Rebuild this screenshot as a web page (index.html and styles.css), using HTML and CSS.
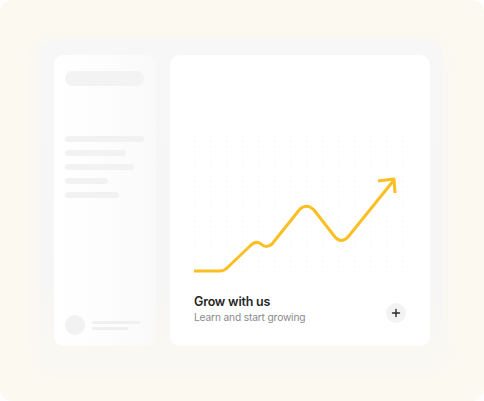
FILE: index.html
```html
<!DOCTYPE html>
<html>
<head>
<meta charset="utf-8">
<link rel="stylesheet" href="styles.css">
</head>
<body>
<div class="frame">
  <div class="panel">
    <aside class="sidebar">
      <div class="pill"></div>
      <div class="lines">
        <div class="line w79"></div>
        <div class="line w61"></div>
        <div class="line w69"></div>
        <div class="line w43"></div>
        <div class="line w54"></div>
      </div>
      <div class="user">
        <div class="avatar"></div>
        <div class="user-lines">
          <div class="uline u1"></div>
          <div class="uline u2"></div>
        </div>
      </div>
    </aside>
    <main class="card">
      <svg class="chart" width="214" height="150" viewBox="0 0 214 150">
        <g class="grid">
          <line x1="0.5" y1="1" x2="0.5" y2="149"/>
          <line x1="16.5" y1="1" x2="16.5" y2="149"/>
          <line x1="32.5" y1="1" x2="32.5" y2="149"/>
          <line x1="48.5" y1="1" x2="48.5" y2="149"/>
          <line x1="64.5" y1="1" x2="64.5" y2="149"/>
          <line x1="80.5" y1="1" x2="80.5" y2="149"/>
          <line x1="96.5" y1="1" x2="96.5" y2="149"/>
          <line x1="112.5" y1="1" x2="112.5" y2="149"/>
          <line x1="128.5" y1="1" x2="128.5" y2="149"/>
          <line x1="144.5" y1="1" x2="144.5" y2="149"/>
          <line x1="160.5" y1="1" x2="160.5" y2="149"/>
          <line x1="176.5" y1="1" x2="176.5" y2="149"/>
          <line x1="192.5" y1="1" x2="192.5" y2="149"/>
          <line x1="208.5" y1="1" x2="208.5" y2="149"/>
        </g>
        <path class="trend" d="M0 146 H26 Q30 146 33 143 L56 121 Q62 115 67 119 Q72 124 78 119 L106 84 Q113 78 120 85 L141 112 Q147 119 154 112 L200 55"/>
        <path class="trend" d="M184 56 L200 54 L201 68"/>
      </svg>
      <div class="footer">
        <div class="texts">
          <div class="title">Grow with us</div>
          <div class="sub">Learn and start growing</div>
        </div>
        <div class="plus">
          <svg width="10" height="10" viewBox="0 0 10 10"><path d="M5 1.5V8.5M1.5 5H8.5" stroke="#2a2a2a" stroke-width="1.4" stroke-linecap="round"/></svg>
        </div>
      </div>
    </main>
  </div>
</div>
</body>
</html>
```
FILE: styles.css
```css
html, body {
  margin: 0;
  padding: 0;
  background: #ffffff;
}
.frame {
  width: 484px;
  height: 401px;
  box-sizing: border-box;
  border-radius: 12px;
  background: #fcf9f0;
  padding: 40px 41px 0 40px;
  font-family: Inter, "Noto Sans", sans-serif;
  overflow: hidden;
}
.panel {
  display: flex;
  gap: 14px;
  padding: 15px 13px 16px 14px;
  border-radius: 14px;
  background: linear-gradient(to bottom, #f7f7f8 0%, #f6f6f6 75%, rgba(246,246,246,0.3) 100%);
  box-shadow: 0 4px 14px 4px rgba(246,246,246,0.7);
}
.sidebar {
  width: 102px;
  height: 291px;
  box-sizing: border-box;
  padding: 16px 12px 11px 11px;
  border-radius: 9px;
  background: linear-gradient(to right, #ffffff 0%, #fdfdfd 50%, #f9f9f9 100%);
  display: flex;
  flex-direction: column;
}
.pill {
  height: 15px;
  border-radius: 8px;
  background: #f3f3f3;
}
.lines {
  margin-top: 50px;
  display: flex;
  flex-direction: column;
  gap: 8px;
}
.line {
  height: 6px;
  border-radius: 3px;
  background: #f2f2f2;
}
.w79 { width: 79px; }
.w61 { width: 61px; }
.w69 { width: 69px; }
.w43 { width: 43px; }
.w54 { width: 54px; }
.user {
  margin-top: auto;
  display: flex;
  align-items: center;
  gap: 7px;
}
.avatar {
  width: 20px;
  height: 20px;
  border-radius: 50%;
  background: #f2f2f2;
}
.user-lines {
  display: flex;
  flex-direction: column;
  gap: 3px;
}
.uline {
  height: 3px;
  border-radius: 2px;
  background: #f0f0f0;
}
.u1 { width: 48px; }
.u2 { width: 36px; }
.card {
  width: 260px;
  height: 291px;
  box-sizing: border-box;
  border-radius: 10px;
  background: #ffffff;
  padding: 70px 24px 0 24px;
  display: flex;
  flex-direction: column;
}
.chart {
  display: block;
}
.grid line {
  stroke: #f5f5f5;
  stroke-width: 1;
  stroke-dasharray: 1.5 3.5;
}
.trend {
  fill: none;
  stroke: #fbbf24;
  stroke-width: 3;
  stroke-linejoin: round;
  stroke-linecap: butt;
}
.footer {
  margin-top: 19px;
  display: flex;
  align-items: center;
  justify-content: space-between;
}
.title {
  font-size: 12.5px;
  font-weight: 600;
  color: #262626;
  line-height: 16px;
  letter-spacing: -0.2px;
}
.sub {
  margin-top: 0;
  font-size: 10.2px;
  color: #8a8a8a;
  line-height: 14px;
  letter-spacing: -0.15px;
}
.plus {
  width: 20px;
  height: 20px;
  border-radius: 50%;
  background: #f3f3f3;
  display: flex;
  align-items: center;
  justify-content: center;
  margin-top: 8px;
}
.plus svg { display: block; }
```
